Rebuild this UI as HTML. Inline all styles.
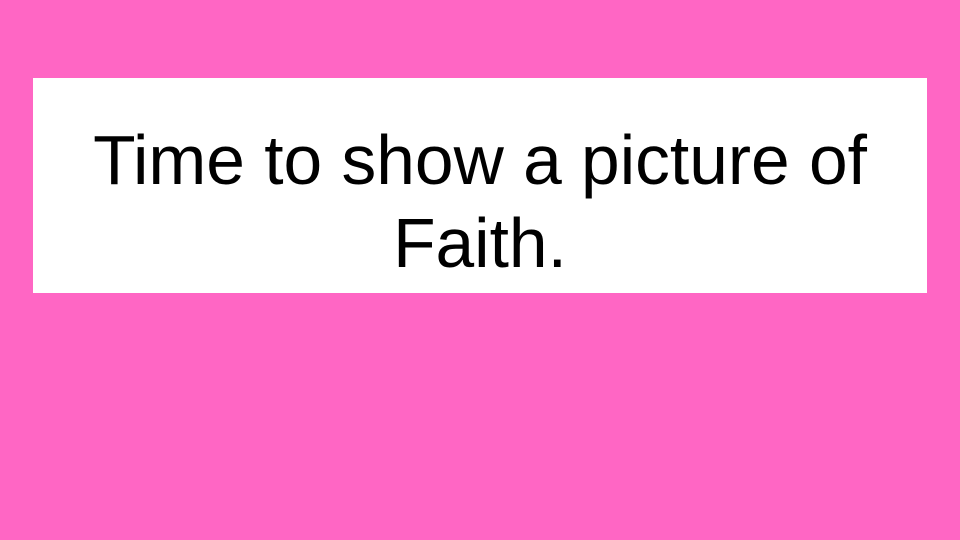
<!DOCTYPE html>
<html><head><style>
body{margin:0;width:960px;height:540px;background:#ff66c4;position:relative;overflow:hidden;font-family:"Liberation Sans",sans-serif}
.box{position:absolute;left:33px;top:78px;width:894px;height:215px;background:#fff}
.l{position:absolute;left:0;width:960px;text-align:center;font-size:69.5px;line-height:70px;color:#000;white-space:nowrap}
</style></head><body>
<div class="box"></div>
<div class="l" style="top:125px">Time to show a picture of</div>
<div class="l" style="top:208px">Faith.</div>
</body></html>
